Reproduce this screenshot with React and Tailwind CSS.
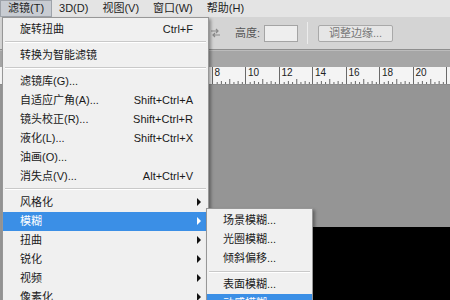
import React from 'react';

const font = "font-['Liberation_Sans','Noto_Sans_CJK_SC',sans-serif]";

const topMenus = ['滤镜(T)', '3D(D)', '视图(V)', '窗口(W)', '帮助(H)'];

const filterItems = [
  { label: '旋转扭曲', shortcut: 'Ctrl+F' },
  { sep: true },
  { label: '转换为智能滤镜' },
  { sep: true },
  { label: '滤镜库(G)...' },
  { label: '自适应广角(A)...', shortcut: 'Shift+Ctrl+A' },
  { label: '镜头校正(R)...', shortcut: 'Shift+Ctrl+R' },
  { label: '液化(L)...', shortcut: 'Shift+Ctrl+X' },
  { label: '油画(O)...' },
  { label: '消失点(V)...', shortcut: 'Alt+Ctrl+V' },
  { sep: true },
  { label: '风格化', sub: true },
  { label: '模糊', sub: true, active: true },
  { label: '扭曲', sub: true },
  { label: '锐化', sub: true },
  { label: '视频', sub: true },
  { label: '像素化', sub: true },
];

const blurItems = [
  { label: '场景模糊...' },
  { label: '光圈模糊...' },
  { label: '倾斜偏移...' },
  { sep: true },
  { label: '表面模糊...' },
  { label: '动感模糊...', active: true },
];

function Separator() {
  return (
    <div className="h-[7px] flex flex-col justify-center px-[2px]">
      <div className="border-t border-[#c9c9c9]" />
      <div className="border-t border-white" />
    </div>
  );
}

function Arrow({ light }) {
  return (
    <div
      className={
        'w-0 h-0 border-y-[4px] border-y-transparent border-l-[4px] ' +
        (light ? 'border-l-white' : 'border-l-[#111]')
      }
    />
  );
}

function MenuItem({ item, pad }) {
  return (
    <div
      className={
        'flex h-[19px] items-center justify-between ' +
        pad +
        (item.active ? ' bg-[#3b8fe6] text-white' : ' text-[#1a1a1a]')
      }
    >
      <span>{item.label}</span>
      {item.shortcut && <span className="mr-[15px]">{item.shortcut}</span>}
      {item.sub && (
        <span className="mr-[7px]">
          <Arrow light={item.active} />
        </span>
      )}
    </div>
  );
}

// ruler segments, 2 units each; only the ones right of the menu carry a label
function Ruler() {
  const nums = [];
  for (let n = -4; n <= 22; n += 2) nums.push(n);
  return (
    <div className="h-[18px] bg-[#f4f4f4] border-b border-[#8c8c8c] flex overflow-hidden">
      <div className="w-[10.5px] shrink-0" />
      {nums.map((n) => (
        <div key={n} className="relative w-[33.5px] shrink-0 h-full border-l border-[#6a6a6a]">
          {n >= 8 && n <= 20 && (
            <span className="absolute left-[2px] top-[1px] text-[10px] leading-none text-[#222]">{n}</span>
          )}
          <svg className="absolute left-0 bottom-0" width="34" height="6">
            {[1, 2, 3, 4, 5, 6, 7].map((i) => {
              const x = i * 4.19;
              const h = i === 4 ? 5 : i % 2 === 0 ? 3 : 2;
              return <line key={i} x1={x} x2={x} y1={6 - h} y2={6} stroke="#666" strokeWidth="1" />;
            })}
          </svg>
        </div>
      ))}
    </div>
  );
}

export default function App() {
  return (
    <div className={'relative w-[450px] h-[300px] overflow-hidden flex flex-col bg-[#959595] text-[11px] ' + font}>
      {/* menu bar */}
      <div className="h-[17px] flex items-center bg-[#e4e4e4] text-[#1e1e1e]">
        {topMenus.map((m, i) => (
          <div
            key={m}
            className={
              'h-[17px] flex items-center px-[7px] ' +
              (i === 0 ? 'bg-[#c8ccd2] border border-[#9ea3aa]' : '')
            }
          >
            {m}
          </div>
        ))}
      </div>

      {/* options bar */}
      <div className="h-[33px] flex items-center bg-[#d4d4d4] border-b border-[#8e8e8e] pl-[210px] text-[#555]">
        <svg width="11" height="12" viewBox="0 0 11 12" className="mr-[14px]">
          <path d="M1 4h7M6 2l2 2-2 2M10 8H3M5 6l-2 2 2 2" stroke="#8a8a8a" strokeWidth="1.2" fill="none" />
        </svg>
        <span>高度:</span>
        <div className="ml-[4px] w-[34px] h-[17px] bg-[#eeeeee] border border-[#a4a4a4]" />
        <div className="ml-[9px] w-px h-[22px] bg-[#a9a9a9] border-r border-[#ececec]" />
        <div className="ml-[10px] w-[75px] h-[17px] flex items-center justify-center bg-[#e6e6e6] border border-[#a9a9a9] rounded-[2px] text-[#777]">
          调整边缘...
        </div>
      </div>

      {/* tab strip */}
      <div className="h-[17px] bg-[#a6a6a6] border-t border-[#bcbcbc]" />

      <Ruler />

      {/* canvas */}
      <div className="flex-1 flex flex-col pt-[142px] pl-[313px]">
        <div className="flex-1 bg-black" />
      </div>

      {/* filter menu */}
      <div className="absolute left-[2px] top-[17px] w-[207px] h-[290px] pt-[1.5px] bg-[#f0f0f0] border border-[#979797] shadow-[2px_2px_3px_rgba(0,0,0,0.35)]">
        {filterItems.map((it, i) =>
          it.sep ? <Separator key={i} /> : <MenuItem key={i} item={it} pad="pl-[17px]" />
        )}
      </div>

      {/* blur submenu */}
      <div className="absolute left-[206px] top-[208px] w-[107px] h-[120px] pt-[2px] bg-[#f0f0f0] border border-[#979797] shadow-[2px_2px_3px_rgba(0,0,0,0.35)]">
        {blurItems.map((it, i) =>
          it.sep ? <Separator key={i} /> : <MenuItem key={i} item={it} pad="pl-[16px]" />
        )}
      </div>
    </div>
  );
}
